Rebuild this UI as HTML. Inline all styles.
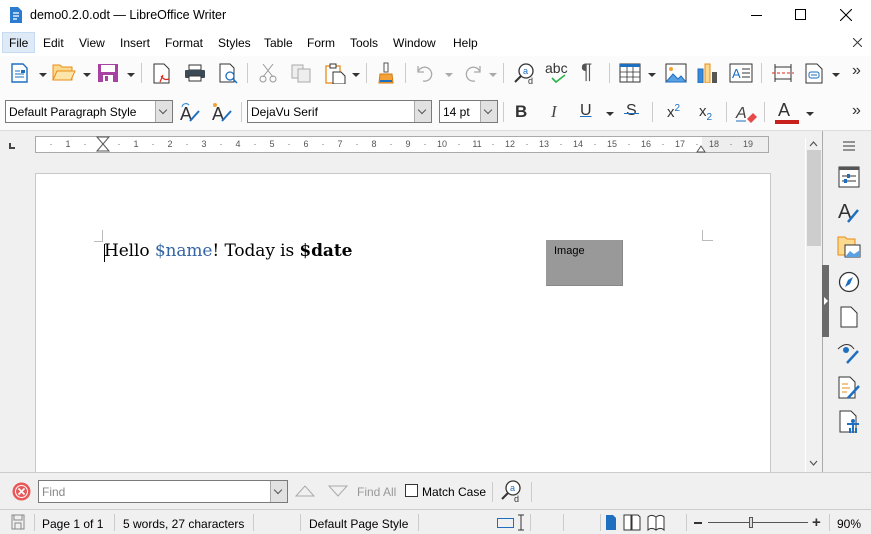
<!DOCTYPE html>
<html><head><meta charset="utf-8"><style>
*{margin:0;padding:0;box-sizing:border-box}
body{width:871px;height:534px;overflow:hidden;background:#f0f0f0;font-family:"Liberation Sans",sans-serif;font-size:12px;color:#000;position:relative}
.a{position:absolute}
.t{font-size:12px;white-space:nowrap}
.ic{position:absolute}
.dd{position:absolute;width:0;height:0;border-left:4px solid transparent;border-right:4px solid transparent;border-top:4px solid #333}
.sep{position:absolute;width:1px;background:#ccc}
.combo{position:absolute;background:#fff;border:1px solid #7a7a7a;height:23px}
.combo .btn{position:absolute;right:0;top:0;width:17px;height:21px;background:#e1e1e1;border-left:1px solid #aaa}
.combo .btn:after{content:"";position:absolute;left:4px;top:6px;width:5px;height:5px;border-right:1px solid #555;border-bottom:1px solid #555;transform:rotate(45deg)}
</style></head><body>
<!-- title bar -->
<div class="a" style="left:0;top:0;width:871px;height:32px;background:#fff"></div>
<svg class="ic" style="left:9px;top:6px" width="14" height="18"><path d="M1 1h8l4 4v12H1z" fill="#2b7bd0"/><path d="M4 7h6M4 10h6M4 13h4" stroke="#fff" stroke-width="1.2"/></svg>
<div class="a t" style="left:30px;top:8px;font-size:12.5px">demo0.2.0.odt — LibreOffice Writer</div>
<div class="a" style="left:751px;top:15px;width:11px;height:1px;background:#000"></div>
<div class="a" style="left:795px;top:9px;width:11px;height:11px;border:1px solid #000"></div>
<svg class="ic" style="left:840px;top:9px" width="12" height="12"><path d="M0 0L12 12M12 0L0 12" stroke="#000" stroke-width="1.1"/></svg>
<!-- menu -->
<div class="a" style="left:0;top:32px;width:871px;height:24px;background:#fff"></div>
<div class="a" style="left:2px;top:32px;width:33px;height:21px;background:#dfeaf7;border:1px solid #c5dbf2"></div>
<div class="a t" style="top:36px;left:9px">File</div>
<div class="a t" style="top:36px;left:43px">Edit</div>
<div class="a t" style="top:36px;left:79px">View</div>
<div class="a t" style="top:36px;left:120px">Insert</div>
<div class="a t" style="top:36px;left:165px">Format</div>
<div class="a t" style="top:36px;left:218px">Styles</div>
<div class="a t" style="top:36px;left:264px">Table</div>
<div class="a t" style="top:36px;left:307px">Form</div>
<div class="a t" style="top:36px;left:350px">Tools</div>
<div class="a t" style="top:36px;left:393px">Window</div>
<div class="a t" style="top:36px;left:453px">Help</div>
<svg class="ic" style="left:853px;top:38px" width="9" height="9"><path d="M0 0L9 9M9 0L0 9" stroke="#333"/></svg>
<!-- toolbars bg -->
<div class="a" style="left:0;top:56px;width:871px;height:74px;background:#fbfbfb"></div>
<svg class="ic" style="left:11px;top:63px" width="18" height="20"><path d="M1 1h11l4 4v14H1z" fill="#fff" stroke="#1e6fc0" stroke-width="1.4"/><path d="M4 8h5M4 11h9M4 14h9" stroke="#1e6fc0"/><rect x="10" y="7" width="4" height="3" fill="#1e6fc0"/></svg>
<div class="dd" style="left:39px;top:73px"></div>
<svg class="ic" style="left:52px;top:63px" width="24" height="19"><path d="M1 2h7l2 2h10v13H1z" fill="#fbd98d" stroke="#e88c1c"/><path d="M1 17l4-9h18l-4 9z" fill="#fde4a8" stroke="#e88c1c"/></svg>
<div class="dd" style="left:83px;top:73px"></div>
<svg class="ic" style="left:97px;top:63px" width="22" height="20"><rect x="1" y="1" width="20" height="18" fill="#a742a3"/><rect x="4" y="2" width="14" height="7" fill="#fff"/><rect x="6" y="12" width="10" height="7" fill="#fff"/><rect x="8" y="13" width="3" height="5" fill="#a742a3"/></svg>
<div class="dd" style="left:127px;top:73px"></div>
<div class="sep" style="left:141px;top:63px;height:20px"></div>
<svg class="ic" style="left:153px;top:63px" width="18" height="21"><path d="M1 1h10l5 5v14H1z" fill="#fff" stroke="#333"/><path d="M8 13c3 4 5 4 8 3M10 12l-3 7" stroke="#e0261c" stroke-width="1.2" fill="none"/></svg>
<svg class="ic" style="left:184px;top:64px" width="22" height="18"><rect x="5" y="1" width="12" height="5" fill="#fff" stroke="#333"/><rect x="1" y="6" width="20" height="8" rx="1" fill="#3c4a55"/><rect x="5" y="12" width="12" height="5" fill="#fff" stroke="#333"/></svg>
<svg class="ic" style="left:219px;top:63px" width="20" height="21"><path d="M1 1h10l4 4v14H1z" fill="#fff" stroke="#333"/><circle cx="11" cy="13" r="4" fill="#fff" stroke="#1e6fc0" stroke-width="1.3"/><path d="M14 16l4 4" stroke="#1e6fc0" stroke-width="1.5"/></svg>
<div class="sep" style="left:247px;top:63px;height:20px"></div>
<svg class="ic" style="left:259px;top:63px" width="18" height="20"><path d="M4 1l10 13M14 1L4 14" stroke="#999"/><circle cx="4" cy="16" r="3" fill="none" stroke="#999"/><circle cx="14" cy="16" r="3" fill="none" stroke="#999"/></svg>
<svg class="ic" style="left:291px;top:64px" width="22" height="19"><rect x="1" y="1" width="11" height="13" fill="#eee" stroke="#aaa"/><rect x="7" y="5" width="12" height="13" fill="#eee" stroke="#aaa"/></svg>
<svg class="ic" style="left:325px;top:63px" width="22" height="21"><rect x="1" y="3" width="14" height="17" fill="#fff" stroke="#e88c1c" stroke-width="1.3"/><rect x="5" y="1" width="6" height="4" fill="#fff" stroke="#333"/><path d="M8 9h8l4 4v8H8z" fill="#fff" stroke="#333"/></svg>
<div class="dd" style="left:352px;top:73px"></div>
<div class="sep" style="left:366px;top:63px;height:20px"></div>
<svg class="ic" style="left:378px;top:62px" width="16" height="22"><rect x="6" y="1" width="4" height="9" fill="#fff" stroke="#555"/><path d="M2 12h12l1 9H1z" fill="#f4a13a" stroke="#d27a10"/><rect x="2" y="18" width="12" height="2" fill="#1e6fc0"/></svg>
<div class="sep" style="left:405px;top:63px;height:20px"></div>
<svg class="ic" style="left:416px;top:64px" width="20" height="18"><path d="M2 8a7 7 0 1 1 5 9M2 2v6h6" fill="none" stroke="#aaa" stroke-width="1.3"/></svg>
<div class="dd" style="left:445px;top:73px;border-top-color:#aaa"></div>
<svg class="ic" style="left:462px;top:64px" width="20" height="18"><path d="M18 8a7 7 0 1 0-5 9M18 2v6h-6" fill="none" stroke="#aaa" stroke-width="1.3"/></svg>
<div class="dd" style="left:489px;top:73px;border-top-color:#aaa"></div>
<div class="sep" style="left:503px;top:63px;height:20px"></div>
<svg class="ic" style="left:513px;top:62px" width="24" height="22"><circle cx="13" cy="9" r="7" fill="#fff" stroke="#333" stroke-width="1.3"/><path d="M8 14l-6 6" stroke="#333" stroke-width="2"/><text x="10" y="12" font-size="9" fill="#1e6fc0" font-family="Liberation Sans">a</text><text x="15" y="22" font-size="9" fill="#333" font-family="Liberation Sans">d</text></svg>
<div class="a" style="left:545px;top:60px;font-size:14px;color:#333">abc</div>
<svg class="ic" style="left:551px;top:74px" width="16" height="10"><path d="M1 4l4 4 9-7" stroke="#2db34a" stroke-width="1.6" fill="none"/></svg>
<div class="a" style="left:581px;top:60px;font-size:21px;color:#555">¶</div>
<div class="sep" style="left:609px;top:63px;height:20px"></div>
<svg class="ic" style="left:619px;top:63px" width="22" height="20"><rect x="1" y="1" width="20" height="18" fill="#fff" stroke="#333"/><rect x="1" y="1" width="20" height="3" fill="#1e6fc0"/><path d="M1 9h20M1 14h20M8 4v15M14 4v15" stroke="#333" stroke-width=".8"/></svg>
<div class="dd" style="left:648px;top:73px"></div>
<svg class="ic" style="left:665px;top:63px" width="22" height="20"><rect x="1" y="1" width="20" height="18" fill="#fff" stroke="#333"/><path d="M1 19l7-8 5 5 3-3 5 6z" fill="#5aa1e3" stroke="#1e6fc0"/><circle cx="6" cy="6" r="2" fill="#f4a13a"/></svg>
<svg class="ic" style="left:697px;top:63px" width="22" height="20"><rect x="1" y="6" width="5" height="14" fill="#3b8ad8" stroke="#1e6fc0"/><rect x="8" y="1" width="5" height="19" fill="#fbd98d" stroke="#e88c1c"/><rect x="15" y="9" width="5" height="11" fill="#555"/></svg>
<svg class="ic" style="left:729px;top:63px" width="24" height="20"><rect x="1" y="1" width="22" height="18" fill="#fff" stroke="#333"/><text x="3" y="15" font-size="13" fill="#1e6fc0" font-family="Liberation Sans">A</text><path d="M13 6h8M13 10h8M13 14h8" stroke="#333"/></svg>
<div class="sep" style="left:761px;top:63px;height:20px"></div>
<svg class="ic" style="left:771px;top:63px" width="24" height="20"><path d="M4 1v18M20 1v18M4 4h16M4 16h16" stroke="#333"/><path d="M1 10h22" stroke="#e0261c" stroke-dasharray="3 2"/></svg>
<svg class="ic" style="left:805px;top:63px" width="18" height="21"><path d="M1 1h11l5 5v14H1z" fill="#fff" stroke="#333"/><rect x="4" y="9" width="10" height="6" rx="2" fill="none" stroke="#1e6fc0"/><path d="M6 12h6" stroke="#1e6fc0"/></svg>
<div class="dd" style="left:832px;top:73px"></div>
<div class="a" style="left:852px;top:62px;font-size:16px;color:#333">»</div>
<!-- toolbar 2 -->
<div class="combo" style="left:5px;top:100px;width:168px"><div class="t" style="position:absolute;left:3px;top:4px">Default Paragraph Style</div><div class="btn"></div></div>
<svg class="ic" style="left:178px;top:101px" width="24" height="22"><text x="2" y="19" font-size="18" fill="#333" font-family="Liberation Sans">A</text><path d="M12 20l9-10" stroke="#1e6fc0" stroke-width="2"/><path d="M4 6a4 4 0 0 1 7-2" stroke="#2b8ad8" fill="none"/></svg>
<svg class="ic" style="left:210px;top:101px" width="24" height="22"><text x="2" y="19" font-size="18" fill="#333" font-family="Liberation Sans">A</text><path d="M12 20l9-10" stroke="#1e6fc0" stroke-width="2"/><circle cx="5" cy="4" r="2" fill="#f4a13a"/></svg>
<div class="sep" style="left:241px;top:102px;height:20px"></div>
<div class="combo" style="left:247px;top:100px;width:185px"><div class="t" style="position:absolute;left:3px;top:4px">DejaVu Serif</div><div class="btn"></div></div>
<div class="combo" style="left:439px;top:100px;width:59px"><div class="t" style="position:absolute;left:3px;top:4px">14 pt</div><div class="btn"></div></div>
<div class="sep" style="left:503px;top:102px;height:20px"></div>
<div class="a" style="left:515px;top:102px;font-size:17px;font-weight:bold;color:#333">B</div>
<div class="a" style="left:551px;top:102px;font-size:17px;font-style:italic;font-family:'Liberation Serif',serif;color:#444">I</div>
<div class="a" style="left:580px;top:102px;font-size:16px;color:#333;text-decoration:underline;text-decoration-color:#1e6fc0">U</div>
<div class="dd" style="left:606px;top:112px"></div>
<div class="a" style="left:626px;top:102px;font-size:16px;color:#333">S</div>
<div class="a" style="left:624px;top:113px;width:15px;height:1px;background:#1e6fc0"></div>
<div class="sep" style="left:652px;top:102px;height:20px"></div>
<div class="a" style="left:667px;top:103px;font-size:15px;color:#333">x<span style="font-size:10px;color:#1e6fc0;vertical-align:6px">2</span></div>
<div class="a" style="left:699px;top:103px;font-size:15px;color:#333">x<span style="font-size:10px;color:#1e6fc0;vertical-align:-4px">2</span></div>
<div class="sep" style="left:726px;top:102px;height:20px"></div>
<svg class="ic" style="left:735px;top:101px" width="24" height="22"><text x="1" y="17" font-size="16" fill="#444" font-style="italic" font-family="Liberation Sans">A</text><path d="M12 18l6-6 4 4-6 6z" fill="#e84a4a"/><path d="M1 20h10" stroke="#1e6fc0"/></svg>
<div class="sep" style="left:764px;top:102px;height:20px"></div>
<div class="a" style="left:778px;top:100px;font-size:18px;color:#333">A</div>
<div class="a" style="left:775px;top:120px;width:24px;height:4px;background:#c8201c"></div>
<div class="dd" style="left:806px;top:112px"></div>
<div class="a" style="left:852px;top:102px;font-size:16px;color:#333">»</div>
<!-- ruler -->
<div class="a" style="left:0;top:130px;width:871px;height:1px;background:#ddd"></div>
<div class="a" style="left:9px;top:143px;width:6px;height:6px;border-left:2px solid #444;border-bottom:2px solid #444"></div>
<svg class="ic" style="left:35px;top:136px" width="735" height="20">
<rect x="0.5" y="0.5" width="733" height="16" fill="#fff" stroke="#aaa"/><rect x="667" y="1" width="66" height="15" fill="#eee"/>
<g font-size="9" fill="#555" font-family="Liberation Sans" text-anchor="middle">
<text x="33" y="11">1</text><text x="101" y="11">1</text><text x="135" y="11">2</text><text x="169" y="11">3</text><text x="203" y="11">4</text><text x="237" y="11">5</text><text x="271" y="11">6</text><text x="305" y="11">7</text><text x="339" y="11">8</text><text x="373" y="11">9</text><text x="407" y="11">10</text><text x="442" y="11">11</text><text x="475" y="11">12</text><text x="509" y="11">13</text><text x="543" y="11">14</text><text x="577" y="11">15</text><text x="611" y="11">16</text><text x="645" y="11">17</text><text x="679" y="11">18</text><text x="713" y="11">19</text></g>
<path d="M16 8v1M50 8v1M84 8v1M118 8v1M152 8v1M186 8v1M220 8v1M254 8v1M288 8v1M322 8v1M356 8v1M390 8v1M424 8v1M458 8v1M492 8v1M526 8v1M560 8v1M594 8v1M628 8v1M662 8v1M696 8v1" stroke="#777"/>
<path d="M62 1l6 7-6 7h12l-6-7 6-7z" fill="#fff" stroke="#555"/><path d="M662 16l4-6 4 6z" fill="#fff" stroke="#555"/></svg>
<!-- document area -->
<div class="a" style="left:35px;top:173px;width:736px;height:300px;background:#fff;border:1px solid #c8c8c8;border-bottom:none"></div>
<div class="a" style="left:94px;top:230px;width:9px;height:12px;border-right:1px solid #bbb;border-bottom:1px solid #bbb"></div>
<div class="a" style="left:702px;top:230px;width:11px;height:11px;border-left:1px solid #bbb;border-bottom:1px solid #bbb"></div>
<div class="a" style="left:104px;top:244px;width:1px;height:18px;background:#000"></div>
<div class="a" style="left:104px;top:241px;font-family:'DejaVu Serif',serif;font-size:17px;letter-spacing:-0.1px;white-space:nowrap">Hello <span style="color:#3465a4">$name</span>! Today is <b>$date</b></div>
<div class="a" style="left:546px;top:240px;width:77px;height:46px;background:#999;border-right:1px solid #888;border-bottom:1px solid #888"></div>
<div class="a" style="left:554px;top:245px;font-size:11px">Image</div>
<!-- scrollbar -->
<div class="a" style="left:805px;top:138px;width:17px;height:334px;background:#f0f0f0;border-left:1px solid #fff"></div>
<div class="a" style="left:807px;top:150px;width:14px;height:96px;background:#cdcdcd"></div>
<svg class="ic" style="left:809px;top:140px" width="9" height="8"><path d="M1 6l3.5-4 3.5 4" stroke="#555" fill="none" stroke-width="1.2"/></svg>
<svg class="ic" style="left:809px;top:459px" width="9" height="8"><path d="M1 2l3.5 4 3.5-4" stroke="#555" fill="none" stroke-width="1.2"/></svg>
<!-- sidebar -->
<div class="a" style="left:822px;top:131px;width:1px;height:341px;background:#aaa"></div>
<div class="a" style="left:822px;top:265px;width:7px;height:72px;background:#6b6b6b"></div>
<div class="a" style="left:824px;top:297px;width:0;height:0;border-top:4px solid transparent;border-bottom:4px solid transparent;border-left:4px solid #fff"></div>
<svg class="ic" style="left:843px;top:141px" width="12" height="10"><path d="M0 1h12M0 5h12M0 9h12" stroke="#333"/></svg>
<svg class="ic" style="left:838px;top:166px" width="22" height="22"><rect x="1" y="1" width="20" height="20" fill="#fff" stroke="#333"/><rect x="1" y="1" width="20" height="3" fill="#555"/><path d="M4 10h14M4 15h14" stroke="#333"/><rect x="9" y="8" width="3" height="4" fill="#1e6fc0"/><rect x="6" y="13" width="3" height="4" fill="#1e6fc0"/></svg>
<svg class="ic" style="left:838px;top:200px" width="24" height="24"><text x="0" y="18" font-size="20" fill="#333" font-family="Liberation Sans">A</text><path d="M10 22l10-12" stroke="#1e6fc0" stroke-width="2.5"/></svg>
<svg class="ic" style="left:837px;top:235px" width="24" height="24"><path d="M1 2h7l2 2h8v16H1z" fill="#fbd98d" stroke="#e88c1c"/><rect x="8" y="10" width="15" height="12" fill="#fff" stroke="#333"/><path d="M8 22l5-6 4 3 6-4v7z" fill="#5aa1e3"/></svg>
<svg class="ic" style="left:838px;top:271px" width="22" height="22"><circle cx="11" cy="11" r="9.5" fill="#fff" stroke="#333" stroke-width="1.3"/><path d="M15 6l-3 7-5 3 3-7z" fill="#1e6fc0"/></svg>
<svg class="ic" style="left:840px;top:306px" width="18" height="22"><path d="M1 1h10l6 6v14H1z" fill="#fff" stroke="#333"/></svg>
<svg class="ic" style="left:837px;top:341px" width="24" height="24"><path d="M1 8c6-6 12-6 16 0" stroke="#333" fill="none"/><circle cx="9" cy="9" r="3" fill="#1e6fc0"/><path d="M10 22l11-12" stroke="#1e6fc0" stroke-width="2.5"/></svg>
<svg class="ic" style="left:838px;top:376px" width="24" height="24"><path d="M1 1h11l5 5v16H1z" fill="#fff" stroke="#333"/><path d="M4 8h6M4 12h8M4 16h5" stroke="#e88c1c"/><path d="M10 22l11-12" stroke="#1e6fc0" stroke-width="2.5"/></svg>
<svg class="ic" style="left:839px;top:410px" width="22" height="24"><path d="M1 1h11l5 5v16H1z" fill="#fff" stroke="#333"/><circle cx="14" cy="11" r="2" fill="#1e6fc0"/><path d="M8 14h12M14 14v9M11 23v-5M17 23v-5" stroke="#1e6fc0" stroke-width="2"/></svg>
<!-- find bar -->
<div class="a" style="left:0;top:472px;width:871px;height:1px;background:#ccc"></div>
<div class="a" style="left:0;top:473px;width:871px;height:36px;background:#f0f0f0"></div>
<svg class="ic" style="left:12px;top:482px" width="19" height="19"><circle cx="9.5" cy="9.5" r="9" fill="#e85a5a"/><circle cx="9.5" cy="9.5" r="6.5" fill="#fff"/><circle cx="9.5" cy="9.5" r="5.5" fill="#e85a5a"/><path d="M6.5 6.5l6 6M12.5 6.5l-6 6" stroke="#fff" stroke-width="1.6"/></svg>
<div class="combo" style="left:38px;top:480px;width:250px"><div class="t" style="position:absolute;left:3px;top:4px;color:#888">Find</div><div class="btn"></div></div>
<svg class="ic" style="left:295px;top:485px" width="20" height="12"><path d="M1 11L10 1l9 10z" fill="none" stroke="#aaa"/></svg>
<svg class="ic" style="left:328px;top:485px" width="20" height="12"><path d="M1 1l9 10 9-10z" fill="none" stroke="#aaa"/></svg>
<div class="a t" style="left:357px;top:485px;color:#999">Find All</div>
<div class="a" style="left:405px;top:484px;width:13px;height:13px;background:#fff;border:1px solid #333"></div>
<div class="a t" style="left:422px;top:485px">Match Case</div>
<div class="sep" style="left:492px;top:482px;height:20px"></div>
<svg class="ic" style="left:500px;top:479px" width="24" height="24"><circle cx="13" cy="9" r="7" fill="#fff" stroke="#333" stroke-width="1.3"/><path d="M8 14l-6 6" stroke="#333" stroke-width="2"/><text x="10" y="12" font-size="9" fill="#1e6fc0" font-family="Liberation Sans">a</text><text x="14" y="23" font-size="9" fill="#333" font-family="Liberation Sans">d</text></svg>
<div class="sep" style="left:531px;top:482px;height:20px"></div>
<!-- status bar -->
<div class="a" style="left:0;top:509px;width:871px;height:1px;background:#ccc"></div>
<div class="a" style="left:0;top:510px;width:871px;height:24px;background:#f0f0f0"></div>
<svg class="ic" style="left:11px;top:514px" width="14" height="16"><rect x="1" y="1" width="12" height="14" fill="none" stroke="#888"/><rect x="3" y="1" width="8" height="5" fill="none" stroke="#888"/><rect x="4" y="9" width="6" height="6" fill="none" stroke="#888"/></svg>
<div class="sep" style="left:34px;top:514px;height:17px"></div>
<div class="a t" style="left:42px;top:517px">Page 1 of 1</div>
<div class="sep" style="left:114px;top:514px;height:17px"></div>
<div class="a t" style="left:123px;top:517px">5 words, 27 characters</div>
<div class="sep" style="left:253px;top:514px;height:17px"></div>
<div class="sep" style="left:300px;top:514px;height:17px"></div>
<div class="a t" style="left:309px;top:517px">Default Page Style</div>
<div class="sep" style="left:418px;top:514px;height:17px"></div>
<div class="a" style="left:497px;top:518px;width:17px;height:10px;border:1px solid #1e6fc0"></div>
<svg class="ic" style="left:517px;top:514px" width="8" height="17"><path d="M4 1v15M1 1h6M1 16h6" stroke="#333"/></svg>
<div class="sep" style="left:530px;top:514px;height:17px"></div>
<div class="sep" style="left:563px;top:514px;height:17px"></div>
<div class="sep" style="left:600px;top:514px;height:17px"></div>
<svg class="ic" style="left:605px;top:514px" width="76" height="17"><path d="M1 1h7l3 3v12H1z" fill="#1e6fc0"/><path d="M19 1h7v15h-7zM27 1h6l2 2v13h-8z" fill="#fff" stroke="#333"/><path d="M51 3c3-2 6-2 8 0v13c-2-2-5-2-8 0zM51 3c-3-2-6-2-8 0v13c2-2 5-2 8 0z" fill="#fff" stroke="#333"/></svg>
<div class="sep" style="left:686px;top:514px;height:17px"></div>
<div class="a" style="left:694px;top:522px;width:8px;height:2px;background:#333"></div>
<div class="a" style="left:708px;top:522px;width:100px;height:1px;background:#555"></div>
<div class="a" style="left:749px;top:517px;width:4px;height:11px;background:#ddd;border:1px solid #555"></div>
<div class="a" style="left:812px;top:517px;font-size:15px;line-height:12px;color:#333;font-weight:bold">+</div>
<div class="sep" style="left:829px;top:514px;height:17px"></div>
<div class="a t" style="left:837px;top:517px">90%</div>
</body></html>
